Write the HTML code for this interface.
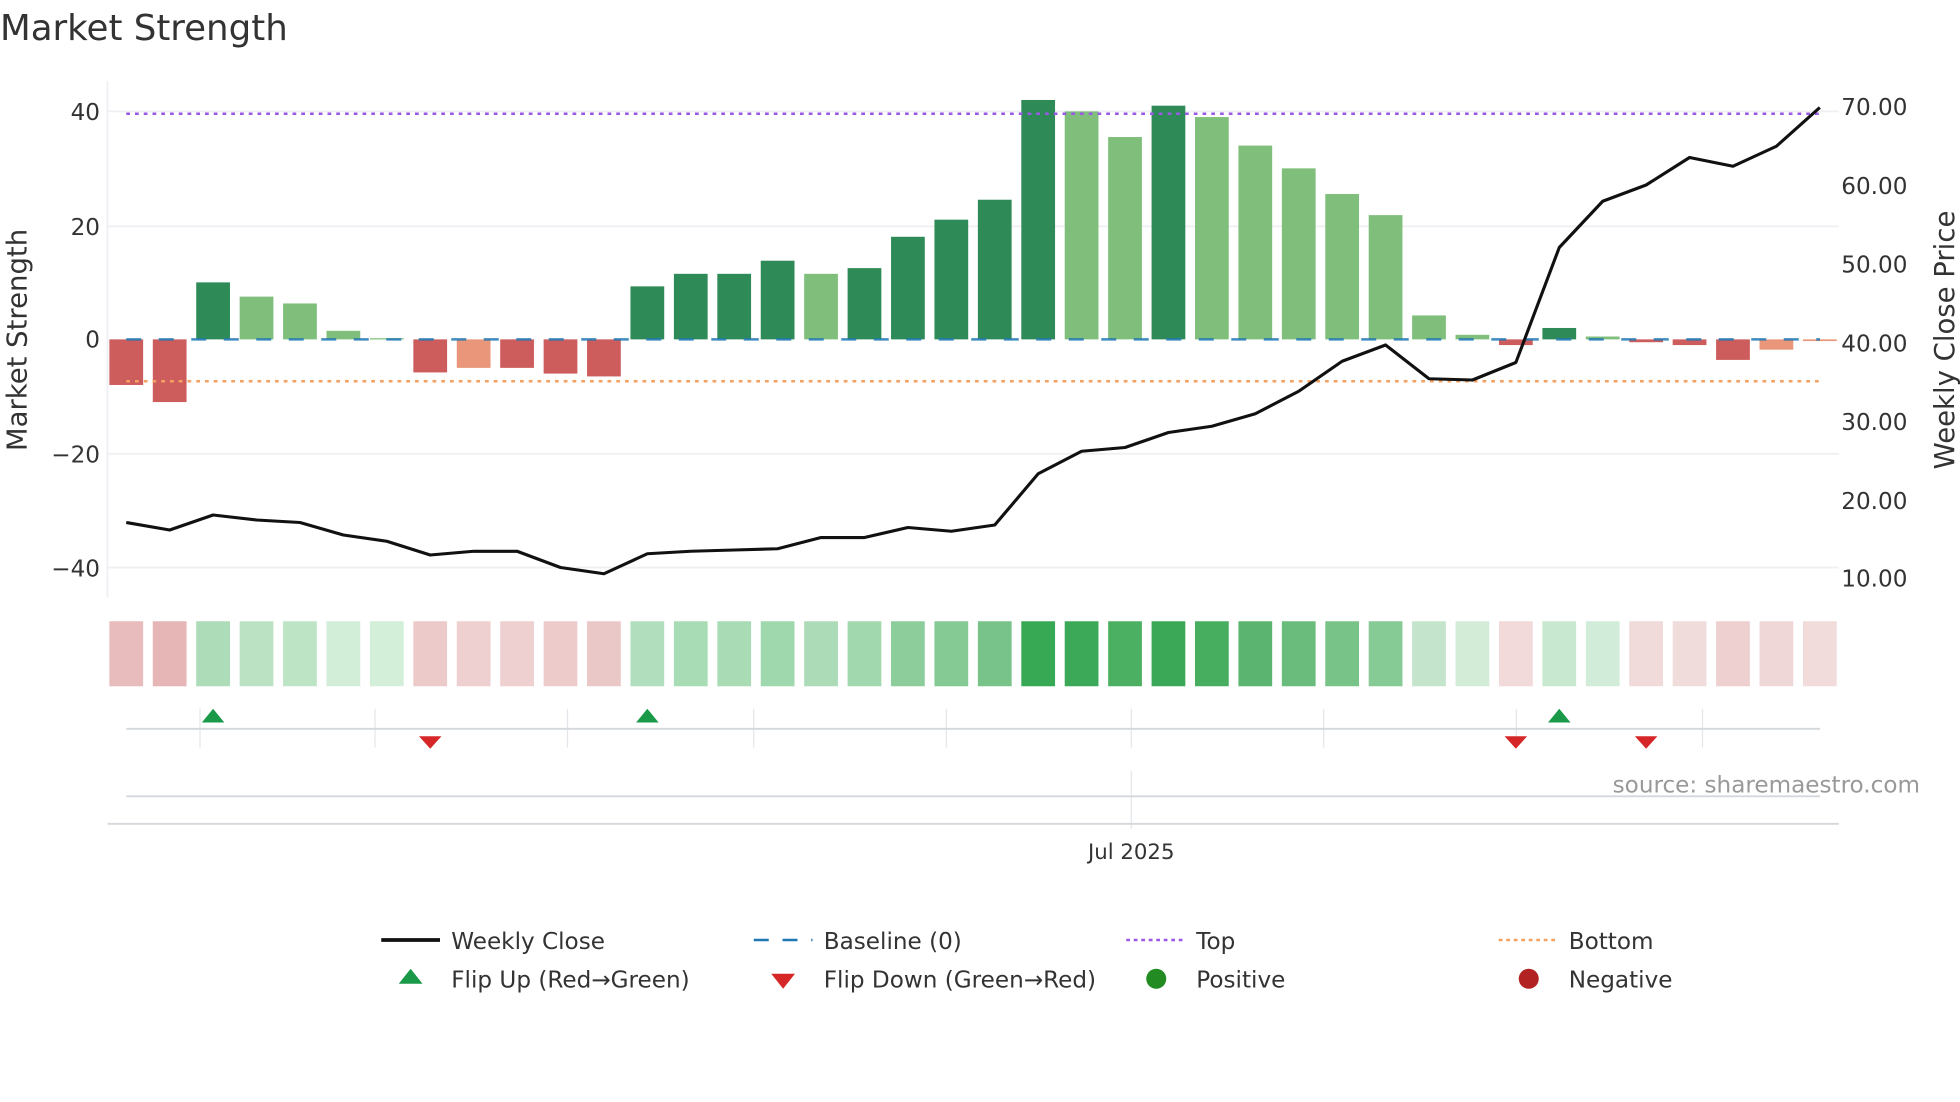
<!DOCTYPE html>
<html><head><meta charset="utf-8"><style>
html,body{margin:0;padding:0;background:#fff;}
svg{display:block;font-family:"DejaVu Sans","Liberation Sans",sans-serif;}
</style></head><body>
<svg id="s" width="1960" height="1102" viewBox="0 0 1568 881.6" xmlns="http://www.w3.org/2000/svg">
<rect width="1568" height="882" fill="#fff"/>
<g id="grid" stroke="#eef0f3" stroke-width="1.5">
<line x1="86" x2="1471" y1="89" y2="89"/><line x1="86" x2="1471" y1="181" y2="181"/>
<line x1="86" x2="1471" y1="363" y2="363"/><line x1="86" x2="1471" y1="454" y2="454"/>
<line x1="86" x2="86" y1="65" y2="478"/>
</g>
<g id="bars"></g>
<line x1="101" x2="1456" y1="271.5" y2="271.5" stroke="#1f77b4" stroke-width="2" stroke-dasharray="12,14" opacity="0.85"/>
<line x1="101" x2="1456" y1="91" y2="91" stroke="#9b59e6" stroke-width="2" stroke-dasharray="3,4"/>
<line x1="101" x2="1456" y1="305" y2="305" stroke="#f4a261" stroke-width="2" stroke-dasharray="3,4"/>
<polyline id="pl" fill="none" stroke="#111" stroke-width="2.5" stroke-linejoin="round"/>
<g id="heat"></g>
<g stroke="#e3e6ea" stroke-width="1">
<line x1="160" x2="160" y1="567" y2="598"/><line x1="300" x2="300" y1="567" y2="598"/><line x1="454" x2="454" y1="567" y2="598"/><line x1="603" x2="603" y1="567" y2="598"/><line x1="757" x2="757" y1="567" y2="598"/><line x1="905" x2="905" y1="567" y2="598"/><line x1="1059" x2="1059" y1="567" y2="598"/><line x1="1213" x2="1213" y1="567" y2="598"/><line x1="1362" x2="1362" y1="567" y2="598"/>
<line x1="905" x2="905" y1="617" y2="663"/>
</g>
<line x1="101" x2="1456" y1="583" y2="583" stroke="#d4d7db" stroke-width="1.5"/>
<line x1="101" x2="1456" y1="637" y2="637" stroke="#d4d7db" stroke-width="1.5"/>
<line x1="86" x2="1471" y1="659" y2="659" stroke="#d4d7db" stroke-width="1.5"/>
<g id="flips"></g>
<g fill="#333" font-size="18.5">
<text x="0" y="32" font-size="28.5">Market Strength</text>
<text x="80" y="96" text-anchor="end">40</text>
<text x="80" y="188" text-anchor="end">20</text>
<text x="80" y="278" text-anchor="end">0</text>
<text x="80" y="370" text-anchor="end">−20</text>
<text x="80" y="461" text-anchor="end">−40</text>
<text x="1473" y="92">70.00</text>
<text x="1473" y="155">60.00</text>
<text x="1473" y="218">50.00</text>
<text x="1473" y="281">40.00</text>
<text x="1473" y="344">30.00</text>
<text x="1473" y="407">20.00</text>
<text x="1473" y="469">10.00</text>
<text transform="translate(21,272) rotate(-90)" text-anchor="middle" font-size="22">Market Strength</text>
<text transform="translate(1563,272) rotate(-90)" text-anchor="middle" font-size="22">Weekly Close Price</text>
<text x="905" y="687" text-anchor="middle" font-size="17">Jul 2025</text>
<text x="1536" y="634" text-anchor="end" fill="#999" font-size="18.5">source: sharemaestro.com</text>
<text x="361" y="759">Weekly Close</text>
<text x="659" y="759">Baseline (0)</text>
<text x="957" y="759">Top</text>
<text x="1255" y="759">Bottom</text>
<text x="361" y="790">Flip Up (Red→Green)</text>
<text x="659" y="790">Flip Down (Green→Red)</text>
<text x="957" y="790">Positive</text>
<text x="1255" y="790">Negative</text>
</g>
<line x1="305" x2="352" y1="752" y2="752" stroke="#111" stroke-width="3"/>
<line x1="603" x2="650" y1="752" y2="752" stroke="#1f77b4" stroke-width="2" stroke-dasharray="12,11"/>
<line x1="901" x2="946" y1="752" y2="752" stroke="#9b59e6" stroke-width="2" stroke-dasharray="3,3"/>
<line x1="1199" x2="1244" y1="752" y2="752" stroke="#f4a261" stroke-width="2" stroke-dasharray="3,3"/>
<polygon points="319,787 338,787 328.5,775" fill="#1a9a48"/>
<polygon points="617,779 636,779 626.5,791" fill="#d62728"/>
<circle cx="925" cy="783" r="8" fill="#228b22"/>
<circle cx="1223" cy="783" r="8" fill="#b22222"/>
<script>
var v=[-8,-11,10,7.5,6.3,1.5,0.2,-5.8,-5,-5,-6,-6.5,9.3,11.5,11.5,13.8,11.5,12.5,18,21,24.5,42,40,35.5,41,39,34,30,25.5,21.8,4.2,0.8,-1,2,0.5,-0.5,-1,-3.6,-1.8,-0.3];
var t=['r','r','d','l','l','l','l','r','s','r','r','r','d','d','d','d','l','d','d','d','d','d','l','l','d','l','l','l','l','l','l','l','r','d','l','r','r','r','s','s'];
var C={d:'#2e8b57',l:'#7fbf7b',r:'#cd5c5c',s:'#e9967a'};
var L=[418,424,412,416,418,428,433,444,441,441,454,459,443,441,440,439,430,430,422,425,420,379,361,358,346,341,331,313,289,276,303,304,290,198,161,148,126,133,117,86];
var H=['#e8bcbc','#e6b5b5','#acdcb8','#bbe3c3','#bde4c5','#d2eed8','#d3eed9','#edcaca','#efd0d0','#eed0d0','#edcbcb','#ebc8c8','#b1dfbd','#a8dcb4','#a9dcb5','#9fd8ac','#abdcb7','#a1d8ad','#8ccd9b','#85ca95','#77c389','#37a853','#3ba957','#4cb063','#3aa856','#47ae60','#5bb571','#6abc7c','#78c388','#86ca96','#c4e5cb','#d2ecd8','#f2dada','#c8e8cf','#d2ecda','#f1dada','#f1dcdc','#efd0d0','#f0d7d7','#f1dbdb'];
var ns='http://www.w3.org/2000/svg',b=document.getElementById('bars'),h=document.getElementById('heat'),pts=[];
function el(n,a,p){var e=document.createElementNS(ns,n);for(var k in a)e.setAttribute(k,a[k]);p.appendChild(e);}
for(var i=0;i<40;i++){var x=101+i*34.74,y0=271.5,y1=271.5-v[i]*4.56;
el('rect',{x:x-13.5,y:Math.min(y0,y1),width:27,height:Math.max(1,Math.abs(y1-y0)),fill:C[t[i]]},b);
el('rect',{x:x-13.5,y:497,width:27,height:52,fill:H[i]},h);
pts.push(x+','+L[i]);}
document.getElementById('pl').setAttribute('points',pts.join(' '));
var f=document.getElementById('flips');
[2,12,33].forEach(function(i){var x=101+i*34.74;el('polygon',{points:(x-9)+',578 '+(x+9)+',578 '+x+',567',fill:'#1a9a48'},f);});
[7,32,35].forEach(function(i){var x=101+i*34.74;el('polygon',{points:(x-9)+',589 '+(x+9)+',589 '+x+',599',fill:'#d62728'},f);});
</script>
</svg>
</body></html>
